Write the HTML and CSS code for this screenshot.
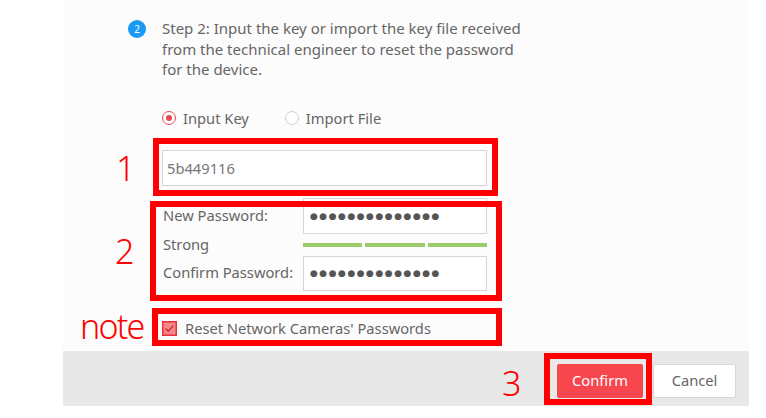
FILE: index.html
```html
<!DOCTYPE html>
<html lang="en">
<head>
<meta charset="utf-8">
<title>Reset Password</title>
<link rel="stylesheet" href="styles.css">
</head>
<body>
<div class="page">
  <div class="dialog">
    <div class="content">
      <div class="step">
        <span class="badge">2</span>
        <p class="step-text">Step 2: Input the key or import the key file received<br>from the technical engineer to reset the password<br>for the device.</p>
      </div>
      <div class="form">
        <div class="radios">
          <label class="radio"><span class="radio-dot on"></span>Input Key</label>
          <label class="radio"><span class="radio-dot"></span>Import File</label>
        </div>
        <div class="annot a1">
          <span class="annot-num n1">1</span>
          <div class="field key">5b449116</div>
        </div>
        <div class="annot a2">
          <span class="annot-num n2">2</span>
          <div class="pw-grid">
            <span class="lbl">New Password:</span>
            <div class="field pw"><span class="dots">●●●●●●●●●●●●●●</span></div>
            <span class="lbl">Strong</span>
            <div class="bars"><i></i><i></i><i></i></div>
            <span class="lbl">Confirm Password:</span>
            <div class="field pw pw2"><span class="dots">●●●●●●●●●●●●●●</span></div>
          </div>
        </div>
        <div class="annot a-note">
          <span class="annot-num n-note">note</span>
          <label class="check">
            <svg class="check-box" width="15" height="15" viewBox="0 0 15 15">
              <rect x="0.75" y="0.75" width="13.5" height="13.5" fill="#f3888c" stroke="#e8303a" stroke-width="1.5"/>
              <path d="M3.6 7.4 L6.3 10.2 L11.4 4.6" fill="none" stroke="#d9232d" stroke-width="1.4"/>
            </svg>
            <span class="check-text">Reset Network Cameras' Passwords</span>
          </label>
        </div>
      </div>
    </div>
    <div class="footer">
      <div class="annot a3">
        <span class="annot-num n3">3</span>
        <button class="btn primary">Confirm</button>
      </div>
      <button class="btn">Cancel</button>
    </div>
  </div>
</div>
</body>
</html>
```
FILE: styles.css
```css
* { box-sizing: border-box; }
html, body { margin: 0; padding: 0; background: #ffffff; }
body { font-family: "Noto Sans", "Open Sans", sans-serif; color: #666; }

.page { width: 766px; height: 418px; overflow: hidden; background: #fff; }

.dialog { margin-left: 63px; width: 686px; background: #fcfcfc; }

.content { padding: 18px 0 12px 65px; }

.step { display: flex; align-items: flex-start; gap: 16px; }
.badge {
  flex: none; width: 18px; height: 18px; margin-top: 2px; border-radius: 50%;
  background: #1a9af7; color: #fff; font-size: 10px; line-height: 18px; text-align: center;
}
.step-text { margin: 0; font-size: 15px; line-height: 20.5px; color: #666; white-space: nowrap; }

.form { padding-left: 34px; }

.radios { display: flex; align-items: center; height: 20px; margin-top: 28px; font-size: 14.7px; color: #666; }
.radio { display: flex; align-items: center; gap: 7px; }
.radio + .radio { margin-left: 36px; }
.radio-dot {
  width: 14px; height: 14px; border-radius: 50%; border: 1px solid #cfcfcf; background: #fff; position: relative;
  margin-top: 1px;
}
.radio-dot.on { border: 1.5px solid #e8474f; }
.radio-dot.on::after {
  content: ""; position: absolute; left: 2.5px; top: 2.5px; width: 6px; height: 6px; border-radius: 50%; background: #e8474f;
}

.field {
  background: #fff; border: 1px solid #d6d6d6; height: 36px; display: flex; align-items: center;
  font-size: 14.7px; color: #777; padding-left: 4px;
}
.key { width: 325px; }

.annot { position: relative; }
.annot::before {
  content: ""; position: absolute; border: 6px solid #ff0000; z-index: 2; pointer-events: none;
}
.annot-num {
  position: absolute; color: #ff0000; font-family: "Noto Sans", sans-serif; font-weight: 300;
  font-size: 34px; line-height: 34px; white-space: nowrap;
}

.a1 { width: 325px; margin-top: 22px; }
.a1::before { left: -9px; right: -11px; top: -12px; bottom: -10px; }
.n1 { left: -46px; top: 1px; }

.a2 { width: 325px; margin-top: 12px; }
.a2::before { left: -12px; right: -15px; top: 3px; bottom: -10px; }
.n2 { left: -47px; top: 36px; }

.pw-grid { display: grid; grid-template-columns: 141px 184px; align-items: center; }
.lbl { font-size: 14.7px; color: #666; padding-left: 1px; margin-top: -2px; }
.pw { padding-left: 6px; }
.pw2 { height: 35px; }
.dots { font-size: 9px; letter-spacing: 1.5px; color: #555; font-family: "DejaVu Sans", sans-serif; }
.bars { display: grid; grid-template-columns: 1fr 1fr 1fr; gap: 3px; height: 4px; margin: 9px 0; }
.bars i { display: block; background: #9ccb6c; }

.a-note { width: 325px; margin-top: 28px; height: 20px; }
.a-note::before { left: -10px; right: -15px; top: -11px; bottom: -7px; }
.n-note { left: -82px; top: -10px; letter-spacing: -1.8px; }
.check { display: flex; align-items: center; gap: 8px; height: 20px; font-size: 14.7px; color: #666; }
.check-box { flex: none; }
.check-text { margin-top: -2px; }

.footer {
  height: 55px; background: #e8e8e8; display: flex; justify-content: flex-end; align-items: flex-start;
  gap: 10px; padding: 13px 13px 0 0;
}
.btn {
  height: 34px; width: 83px; border: 1px solid #d6d6d6; background: #fff; color: #666;
  font-family: "Noto Sans", sans-serif; font-size: 14.7px; padding: 0 0 2px; border-radius: 2px;
}
.btn.primary { width: 86px; background: #f7464e; border-color: #f7464e; color: #fff; display: block; }
.a3 { display: block; }
.a3::before { left: -13px; right: -9px; top: -11px; bottom: -7px; }
.n3 { left: -55px; top: 2px; }
```
